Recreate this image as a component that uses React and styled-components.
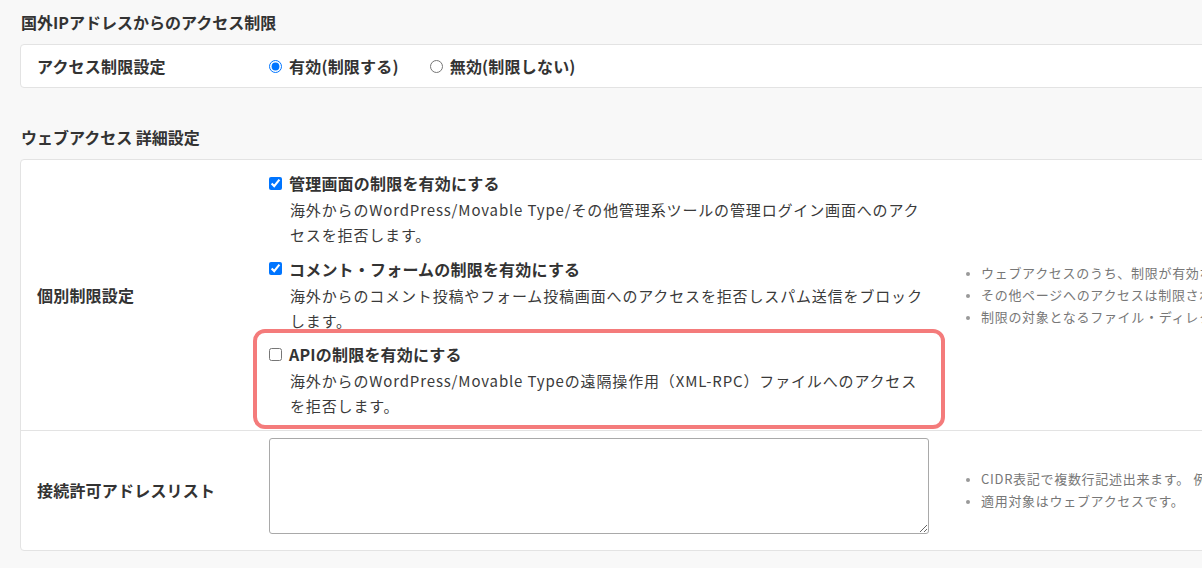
import React from 'react';
import styled, { createGlobalStyle } from 'styled-components';

const GlobalStyle = createGlobalStyle`
  html, body {
    margin: 0;
    padding: 0;
    background: #f8f8f8;
    overflow: hidden;
  }
  body {
    font-family: "Noto Sans CJK JP", "Noto Sans", sans-serif;
    color: #333;
  }
`;

const Page = styled.div`
  width: 1480px;
  padding: 0 20px;
  min-height: 568px;
  box-sizing: border-box;
  border-left: 5px solid #f1f1f1;
  margin-left: -5px;
`;

const Section = styled.section`
  & + & {
    margin-top: 27px;
  }
`;

const SectionTitle = styled.h2`
  margin: 0;
  padding: 10px 1px;
  font-size: 16px;
  line-height: 24px;
  font-weight: 700;
  color: #333;
`;

const Card = styled.div`
  background: #fff;
  border: 1px solid #e3e3e3;
  border-radius: 4px;
`;

const Row = styled.div`
  display: grid;
  grid-template-columns: 232px 660px 1fr;
  align-items: center;
  padding-left: 16px;
  min-height: ${p => p.$minHeight || 0}px;
  & + & {
    border-top: 1px solid #e3e3e3;
  }
`;

const Label = styled.div`
  font-size: 16px;
  font-weight: 700;
  color: #333;
  letter-spacing: 0.2px;
`;

const Value = styled.div`
  padding: ${p => p.$pad || '0'};
`;

const RadioGroup = styled.div`
  display: flex;
  align-items: center;
  gap: 31px;
`;

const Choice = styled.label`
  display: flex;
  align-items: center;
  gap: 7px;
  font-size: 16px;
  font-weight: 700;
  line-height: 26px;
  color: #333;
  letter-spacing: 0.2px;

  input {
    margin: 0;
    width: 13px;
    height: 13px;
  }
`;

const Items = styled.div`
  display: flex;
  flex-direction: column;
  gap: 8.5px;
`;

const Item = styled.div`
  position: relative;
`;

const Highlight = styled(Item)`
  &::before {
    content: '';
    position: absolute;
    inset: -12px -16px -11px -16px;
    border: 4px solid #f47b7b;
    border-radius: 12px;
    pointer-events: none;
  }
`;

const Desc = styled.p`
  margin: 1px 0 0 21px;
  font-size: 15px;
  line-height: 25px;
  color: #3a3a3a;
  letter-spacing: 0.85px;
  white-space: nowrap;
`;

const Hints = styled.ul`
  margin: 0;
  padding: 0 0 0 52px;
  list-style: disc;

  li {
    font-size: 13px;
    line-height: 22px;
    color: #777;
    letter-spacing: 0.7px;
    white-space: nowrap;
  }
  li::marker {
    color: #999;
    font-size: 11px;
  }
`;

const TextArea = styled.textarea`
  display: block;
  width: 660px;
  height: 96px;
  box-sizing: border-box;
  border: 1px solid #a9a9a9;
  border-radius: 3px;
  resize: both;
  font-family: inherit;
`;

const items = [
  {
    title: '管理画面の制限を有効にする',
    lines: [
      '海外からのWordPress/Movable Type/その他管理系ツールの管理ログイン画面へのアク',
      'セスを拒否します。',
    ],
    checked: true,
  },
  {
    title: 'コメント・フォームの制限を有効にする',
    lines: [
      '海外からのコメント投稿やフォーム投稿画面へのアクセスを拒否しスパム送信をブロック',
      'します。',
    ],
    checked: true,
  },
  {
    title: 'APIの制限を有効にする',
    lines: [
      '海外からのWordPress/Movable Typeの遠隔操作用（XML-RPC）ファイルへのアクセス',
      'を拒否します。',
    ],
    checked: false,
    highlight: true,
  },
];

const CheckItem = ({ title, lines, checked, highlight }) => {
  const Wrap = highlight ? Highlight : Item;
  return (
    <Wrap>
      <Choice>
        <input type="checkbox" defaultChecked={checked} />
        {title}
      </Choice>
      <Desc>
        {lines.map((l, i) => (
          <React.Fragment key={i}>
            {l}
            {i < lines.length - 1 && <br />}
          </React.Fragment>
        ))}
      </Desc>
    </Wrap>
  );
};

export default function App() {
  return (
    <>
      <GlobalStyle />
      <Page>
        <Section>
          <SectionTitle>国外IPアドレスからのアクセス制限</SectionTitle>
          <Card>
            <Row $minHeight={42}>
              <Label>アクセス制限設定</Label>
              <Value>
                <RadioGroup>
                  <Choice>
                    <input type="radio" name="limit" defaultChecked />
                    有効(制限する)
                  </Choice>
                  <Choice>
                    <input type="radio" name="limit" />
                    無効(制限しない)
                  </Choice>
                </RadioGroup>
              </Value>
            </Row>
          </Card>
        </Section>

        <Section>
          <SectionTitle>ウェブアクセス 詳細設定</SectionTitle>
          <Card>
            <Row>
              <Label>個別制限設定</Label>
              <Value $pad="10px 0 11.5px">
                <Items>
                  {items.map((it, i) => (
                    <CheckItem key={i} {...it} />
                  ))}
                </Items>
              </Value>
              <Hints>
                <li>ウェブアクセスのうち、制限が有効な項目へのアクセスのみ制限されます。</li>
                <li>その他ページへのアクセスは制限されません。</li>
                <li>制限の対象となるファイル・ディレクトリは自動で判定されます。</li>
              </Hints>
            </Row>
            <Row>
              <Label>接続許可アドレスリスト</Label>
              <Value $pad="7px 0 16px">
                <TextArea />
              </Value>
              <Hints>
                <li>CIDR表記で複数行記述出来ます。 例）192.168.0.0/24</li>
                <li>適用対象はウェブアクセスです。</li>
              </Hints>
            </Row>
          </Card>
        </Section>
      </Page>
    </>
  );
}
